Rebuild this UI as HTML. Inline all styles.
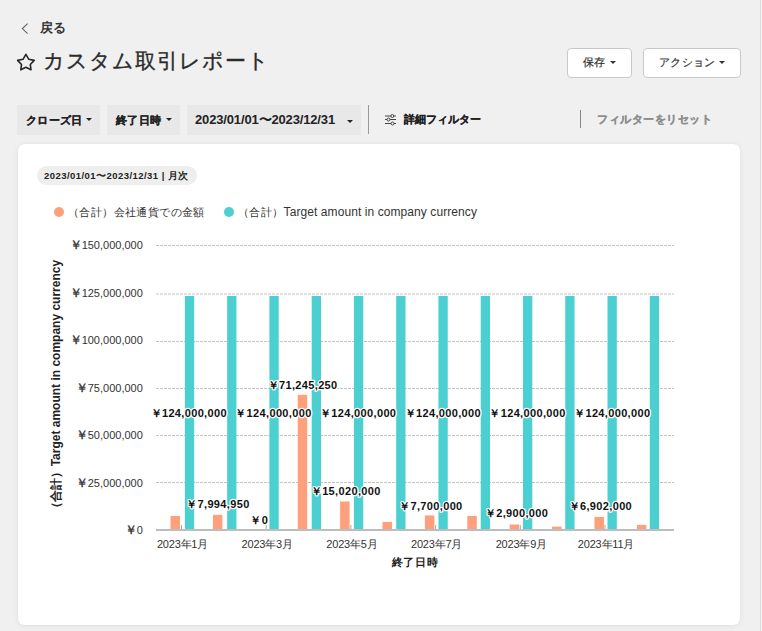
<!DOCTYPE html>
<html><head><meta charset="utf-8">
<style>
html,body{margin:0;padding:0;}
body{width:762px;height:631px;overflow:hidden;background:#f0f0f0;font-family:"Liberation Sans",sans-serif;color:#333;position:relative;}
.a{position:absolute;white-space:nowrap;}
.scr{position:absolute;left:760px;top:0;width:1px;height:631px;background:#dedede;box-shadow:1px 0 0 #f5f5f5;}
.btn{position:absolute;top:48px;height:30px;box-sizing:border-box;border:1px solid #c9c9c9;border-radius:4px;background:#fff;}
.caret{position:absolute;width:0;height:0;border-left:3px solid transparent;border-right:3px solid transparent;border-top:3.5px solid #333;}
.chip{position:absolute;top:105px;height:30px;background:#e8e8e8;border-radius:1px;}
svg text{font-family:"Liberation Sans",sans-serif;}
.yl{font-size:11px;letter-spacing:0;fill:#333;}
.yen{font-size:12px;stroke:#333;stroke-width:0.4px;}
.xl{font-size:11px;letter-spacing:-0.2px;fill:#333;}
.dl{font-size:11px;letter-spacing:0.35px;font-weight:bold;fill:#111;stroke:#fff;stroke-width:2.5px;paint-order:stroke;stroke-linejoin:round;}
.at{font-size:12px;font-weight:bold;fill:#222;}
.xt{font-size:11px;letter-spacing:0.6px}
.card{position:absolute;left:18px;top:143.5px;width:722px;height:481.5px;background:#fff;border-radius:6px;box-shadow:0 0 1px rgba(0,0,0,0.14),0 1px 6px rgba(0,0,0,0.06);}
</style></head><body>
<div class="scr"></div>

<!-- back link -->
<svg class="a" style="left:20px;top:22px" width="10" height="13" viewBox="0 0 10 13"><path d="M7.6 1.6 L2.4 6.6 L7.6 11.6" fill="none" stroke="#666" stroke-width="1.15"/></svg>
<div class="a" style="left:40px;top:19px;font-size:13px;font-weight:bold;line-height:18px;color:#333">戻る</div>

<!-- title -->
<svg class="a" style="left:0;top:0" width="50" height="80" viewBox="0 0 50 80"><path d="M25.9 54.3 L28.8 59.3 L34.2 60.4 L30.3 64.5 L31 69.8 L25.9 67.3 L20.8 69.8 L21.5 64.5 L17.6 60.4 L23 59.3 Z" fill="none" stroke="#262626" stroke-width="1.6" stroke-linejoin="round"/></svg>
<div class="a" style="left:43px;top:46px;font-size:21px;letter-spacing:1px;line-height:30px;color:#2a2a2a;-webkit-text-stroke:0.35px #2a2a2a">カスタム取引レポート</div>

<!-- buttons -->
<div class="btn" style="left:567px;width:65px"></div>
<div class="a" style="left:583px;top:54px;font-size:11px;line-height:16px;color:#333;-webkit-text-stroke:0.2px #333">保存</div>
<div class="caret" style="left:610px;top:61px"></div>
<div class="btn" style="left:643px;width:98px"></div>
<div class="a" style="left:659px;top:54px;font-size:11px;letter-spacing:0.25px;line-height:16px;color:#333;-webkit-text-stroke:0.2px #333">アクション</div>
<div class="caret" style="left:719px;top:61px"></div>

<!-- filter bar -->
<div class="chip" style="left:17px;width:83px"></div>
<div class="a" style="left:26px;top:112px;font-size:11px;letter-spacing:0.3px;font-weight:bold;line-height:16px;color:#222;-webkit-text-stroke:0.2px #222">クローズ日</div>
<div class="caret" style="left:86px;top:118px;border-top-color:#222"></div>
<div class="chip" style="left:107px;width:73px"></div>
<div class="a" style="left:116px;top:112px;font-size:11px;letter-spacing:0.3px;font-weight:bold;line-height:16px;color:#222;-webkit-text-stroke:0.2px #222">終了日時</div>
<div class="caret" style="left:166px;top:118px;border-top-color:#222"></div>
<div class="chip" style="left:187px;width:174px"></div>
<div class="a" style="left:195px;top:112px;font-size:13px;letter-spacing:-0.15px;font-weight:bold;line-height:16px;color:#222">2023/01/01〜2023/12/31</div>
<div class="caret" style="left:347px;top:120px;border-top-color:#222"></div>
<div class="a" style="left:368px;top:105px;width:1px;height:29px;background:#999"></div>
<svg class="a" style="left:384px;top:113px" width="14" height="13" viewBox="0 0 14 13">
<g stroke="#444" stroke-width="1" fill="none"><line x1="1" y1="3" x2="12" y2="3"/><line x1="1" y1="6.5" x2="12" y2="6.5"/><line x1="1" y1="10.5" x2="12" y2="10.5"/></g>
<g stroke="#444" stroke-width="1" fill="#f0f0f0"><circle cx="8.3" cy="3" r="1.5"/><circle cx="4.5" cy="6.5" r="1.5"/><circle cx="8.5" cy="10.5" r="1.5"/></g></svg>
<div class="a" style="left:404px;top:111px;font-size:11px;letter-spacing:0.05px;font-weight:bold;line-height:16px;color:#222;-webkit-text-stroke:0.2px #222">詳細フィルター</div>
<div class="a" style="left:580px;top:110px;width:1px;height:18px;background:#888"></div>
<div class="a" style="left:597px;top:111px;font-size:11px;letter-spacing:0.5px;font-weight:bold;line-height:16px;color:#8e8e8e;-webkit-text-stroke:0.25px #8e8e8e">フィルターをリセット</div>

<!-- card -->
<div class="card"></div>
<div class="a" style="left:37px;top:166px;width:160px;height:19px;border-radius:10px;background:#eeeeee"></div>
<div class="a" style="left:44px;top:169px;font-size:9.5px;letter-spacing:0.45px;font-weight:bold;line-height:13px;color:#222">2023/01/01〜2023/12/31 | 月次</div>

<!-- legend -->
<div class="a" style="left:53.5px;top:207px;width:10px;height:10px;border-radius:50%;background:#ffa07c"></div>
<div class="a" style="left:68px;top:204px;font-size:11px;letter-spacing:0.4px;line-height:16px;color:#333">（合計）会社通貨での金額</div>
<div class="a" style="left:223.5px;top:207px;width:10px;height:10px;border-radius:50%;background:#4ccfd0"></div>
<div class="a" style="left:238px;top:204px;font-size:11px;letter-spacing:0.4px;line-height:16px;color:#333">（合計）<span style="font-size:12px;letter-spacing:0.08px">Target amount in company currency</span></div>

<!--CHART-->
<svg class="a" style="left:0;top:0" width="762" height="631" viewBox="0 0 762 631">
<line x1="156" y1="245.50" x2="674" y2="245.50" stroke="#c4c4c4" stroke-width="1" stroke-dasharray="3 1"/>
<line x1="156" y1="294.00" x2="674" y2="294.00" stroke="#c4c4c4" stroke-width="1" stroke-dasharray="3 1"/>
<line x1="156" y1="341.50" x2="674" y2="341.50" stroke="#c4c4c4" stroke-width="1" stroke-dasharray="3 1"/>
<line x1="156" y1="388.50" x2="674" y2="388.50" stroke="#c4c4c4" stroke-width="1" stroke-dasharray="3 1"/>
<line x1="156" y1="435.50" x2="674" y2="435.50" stroke="#c4c4c4" stroke-width="1" stroke-dasharray="3 1"/>
<line x1="156" y1="482.50" x2="674" y2="482.50" stroke="#c4c4c4" stroke-width="1" stroke-dasharray="3 1"/>
<rect x="170.50" y="516.00" width="9.5" height="14.00" fill="#ffa07c"/>
<rect x="184.90" y="296" width="9.3" height="234.00" fill="#4ccfd0"/>
<rect x="212.90" y="514.84" width="9.5" height="15.16" fill="#ffa07c"/>
<rect x="227.16" y="296" width="9.3" height="234.00" fill="#4ccfd0"/>
<rect x="269.42" y="296" width="9.3" height="234.00" fill="#4ccfd0"/>
<rect x="297.70" y="394.86" width="9.5" height="135.14" fill="#ffa07c"/>
<rect x="311.68" y="296" width="9.3" height="234.00" fill="#4ccfd0"/>
<rect x="340.10" y="501.51" width="9.5" height="28.49" fill="#ffa07c"/>
<rect x="353.94" y="296" width="9.3" height="234.00" fill="#4ccfd0"/>
<rect x="382.50" y="521.90" width="9.5" height="8.10" fill="#ffa07c"/>
<rect x="396.20" y="296" width="9.3" height="234.00" fill="#4ccfd0"/>
<rect x="424.90" y="515.39" width="9.5" height="14.61" fill="#ffa07c"/>
<rect x="438.46" y="296" width="9.3" height="234.00" fill="#4ccfd0"/>
<rect x="467.30" y="516.00" width="9.5" height="14.00" fill="#ffa07c"/>
<rect x="480.72" y="296" width="9.3" height="234.00" fill="#4ccfd0"/>
<rect x="509.70" y="524.50" width="9.5" height="5.50" fill="#ffa07c"/>
<rect x="522.98" y="296" width="9.3" height="234.00" fill="#4ccfd0"/>
<rect x="552.10" y="526.60" width="9.5" height="3.40" fill="#ffa07c"/>
<rect x="565.24" y="296" width="9.3" height="234.00" fill="#4ccfd0"/>
<rect x="594.50" y="516.91" width="9.5" height="13.09" fill="#ffa07c"/>
<rect x="607.50" y="296" width="9.3" height="234.00" fill="#4ccfd0"/>
<rect x="636.90" y="524.90" width="9.5" height="5.10" fill="#ffa07c"/>
<rect x="649.76" y="296" width="9.3" height="234.00" fill="#4ccfd0"/>
<line x1="181.50" y1="525" x2="181.50" y2="530" stroke="#aaa" stroke-width="1"/>
<line x1="266.20" y1="525" x2="266.20" y2="530" stroke="#aaa" stroke-width="1"/>
<line x1="350.90" y1="525" x2="350.90" y2="530" stroke="#aaa" stroke-width="1"/>
<line x1="435.60" y1="525" x2="435.60" y2="530" stroke="#aaa" stroke-width="1"/>
<line x1="520.30" y1="525" x2="520.30" y2="530" stroke="#aaa" stroke-width="1"/>
<line x1="605.00" y1="525" x2="605.00" y2="530" stroke="#aaa" stroke-width="1"/>
<line x1="156" y1="530" x2="674" y2="530" stroke="#bdbdbd" stroke-width="2"/>
<text x="142.8" y="534.00" text-anchor="end" class="yl"><tspan class="yen">￥</tspan>0</text>
<text x="142.8" y="486.58" text-anchor="end" class="yl"><tspan class="yen">￥</tspan>25,000,000</text>
<text x="142.8" y="439.16" text-anchor="end" class="yl"><tspan class="yen">￥</tspan>50,000,000</text>
<text x="142.8" y="391.74" text-anchor="end" class="yl"><tspan class="yen">￥</tspan>75,000,000</text>
<text x="142.8" y="344.32" text-anchor="end" class="yl"><tspan class="yen">￥</tspan>100,000,000</text>
<text x="142.8" y="296.90" text-anchor="end" class="yl"><tspan class="yen">￥</tspan>125,000,000</text>
<text x="142.8" y="249.48" text-anchor="end" class="yl"><tspan class="yen">￥</tspan>150,000,000</text>
<text x="182.50" y="547.5" text-anchor="middle" class="xl">2023年1月</text>
<text x="267.20" y="547.5" text-anchor="middle" class="xl">2023年3月</text>
<text x="351.90" y="547.5" text-anchor="middle" class="xl">2023年5月</text>
<text x="436.60" y="547.5" text-anchor="middle" class="xl">2023年7月</text>
<text x="521.30" y="547.5" text-anchor="middle" class="xl">2023年9月</text>
<text x="606.00" y="547.5" text-anchor="middle" class="xl">2023年11月</text>
<text x="188.75" y="416.80" text-anchor="middle" class="dl">￥124,000,000</text>
<text x="273.45" y="416.80" text-anchor="middle" class="dl">￥124,000,000</text>
<text x="358.15" y="416.80" text-anchor="middle" class="dl">￥124,000,000</text>
<text x="442.85" y="416.80" text-anchor="middle" class="dl">￥124,000,000</text>
<text x="527.55" y="416.80" text-anchor="middle" class="dl">￥124,000,000</text>
<text x="612.25" y="416.80" text-anchor="middle" class="dl">￥124,000,000</text>
<text x="217.90" y="508.24" text-anchor="middle" class="dl">￥7,994,950</text>
<text x="259.25" y="523.60" text-anchor="middle" class="dl">￥0</text>
<text x="302.60" y="389.26" text-anchor="middle" class="dl">￥71,245,250</text>
<text x="345.75" y="494.91" text-anchor="middle" class="dl">￥15,020,000</text>
<text x="430.85" y="509.79" text-anchor="middle" class="dl">￥7,700,000</text>
<text x="516.55" y="517.30" text-anchor="middle" class="dl">￥2,900,000</text>
<text x="600.35" y="510.11" text-anchor="middle" class="dl">￥6,902,000</text>
<text class="at" transform="translate(60.2 387.1) rotate(-90)" text-anchor="middle">（合計）Target amount in company currency</text>
<text class="at xt" x="415" y="566" text-anchor="middle">終了日時</text>
</svg>
<!--/CHART-->
</body></html>
